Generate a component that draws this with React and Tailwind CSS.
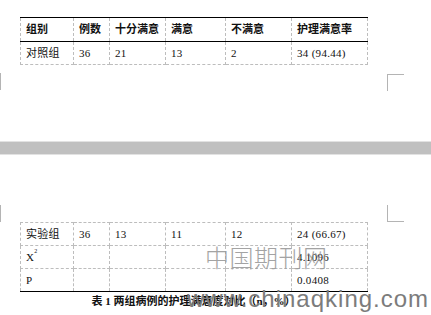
const cjk = { fontFamily: '"Liberation Serif", "Noto Sans CJK SC", serif' };

const cols = [53, 36, 56, 60, 66, 76];

const Cell = ({ children, head }) => (
  <td
    className={`h-[23px] px-[5px] py-0 align-middle whitespace-nowrap border border-dashed border-[#bdbdbd] text-[11px] leading-none ${
      head ? "font-bold" : "tracking-[0.3px]"
    }`}
  >
    {children}
  </td>
);

const ColGroup = () => (
  <colgroup>
    {cols.map((w, i) => (
      <col key={i} style={{ width: w }} />
    ))}
  </colgroup>
);

const CropMark = ({ className }) => <div className={`absolute border-[#b4b4b4] ${className}`} />;

export default function App() {
  return (
    <div className="w-[431px] h-[315px] overflow-hidden bg-white text-[#111] relative" style={cjk}>
      {/* page 1 bottom */}
      <div className="relative h-[141px] pt-[17px] pl-[20px]">
        <table className="border-collapse table-fixed w-[347px]">
          <ColGroup />
          <tbody>
            <tr className="[&>td]:border-t-[1.5px] [&>td]:border-t-black [&>td]:[border-top-style:solid] [&>td]:border-b-[1.5px] [&>td]:border-b-black [&>td]:[border-bottom-style:solid] [&>td]:h-[24px]">
              <Cell head>组别</Cell>
              <Cell head>例数</Cell>
              <Cell head>十分满意</Cell>
              <Cell head>满意</Cell>
              <Cell head>不满意</Cell>
              <Cell head>护理满意率</Cell>
            </tr>
            <tr>
              <Cell>对照组</Cell>
              <Cell>36</Cell>
              <Cell>21</Cell>
              <Cell>13</Cell>
              <Cell>2</Cell>
              <Cell>34 (94.44)</Cell>
            </tr>
          </tbody>
        </table>
        <CropMark className="left-0 top-[73px] h-[17px] border-l" />
        <CropMark className="left-[387px] top-[74px] w-[17px] h-[17px] border-l border-t" />
      </div>

      {/* page gap */}
      <div className="h-[14px] bg-[#c0c0c0] border-y border-[#e2e2e2]" />

      {/* page 2 top */}
      <div className="relative pt-[67px] pl-[20px]">
        <CropMark className="left-0 top-[50px] h-[17px] border-l" />
        <CropMark className="left-[387px] top-[50px] w-[17px] h-[17px] border-l border-b" />
        <table className="border-collapse table-fixed w-[347px]">
          <ColGroup />
          <tbody>
            <tr>
              <Cell>实验组</Cell>
              <Cell>36</Cell>
              <Cell>13</Cell>
              <Cell>11</Cell>
              <Cell>12</Cell>
              <Cell>24 (66.67)</Cell>
            </tr>
            <tr>
              <Cell>
                X<sup className="text-[6px] align-super">2</sup>
              </Cell>
              <Cell />
              <Cell />
              <Cell />
              <Cell />
              <Cell>4.1096</Cell>
            </tr>
            <tr className="[&>td]:border-b-[1.5px] [&>td]:border-b-black [&>td]:[border-bottom-style:solid]">
              <Cell>P</Cell>
              <Cell />
              <Cell />
              <Cell />
              <Cell />
              <Cell>0.0408</Cell>
            </tr>
          </tbody>
        </table>
        <p className="w-[347px] mt-[4px] text-center text-[11px] font-bold leading-none">
          表 1 两组病例的护理满意度对比（n，%）
        </p>
      </div>

      {/* watermarks */}
      <div
        className="absolute left-[205px] top-[245px] text-[24px] leading-none tracking-[0.5px] text-[#9a9a9a] opacity-90"
        style={{ fontFamily: '"Noto Sans CJK SC", sans-serif', fontWeight: 300 }}
      >
        中国期刊网
      </div>
      <div
        className="absolute left-[187px] top-[287px] text-[24px] leading-none tracking-[1px] text-[#7c7c7c] whitespace-nowrap"
        style={{ fontFamily: '"Liberation Sans", sans-serif' }}
      >
        www.chinaqking.com
      </div>
    </div>
  );
}
